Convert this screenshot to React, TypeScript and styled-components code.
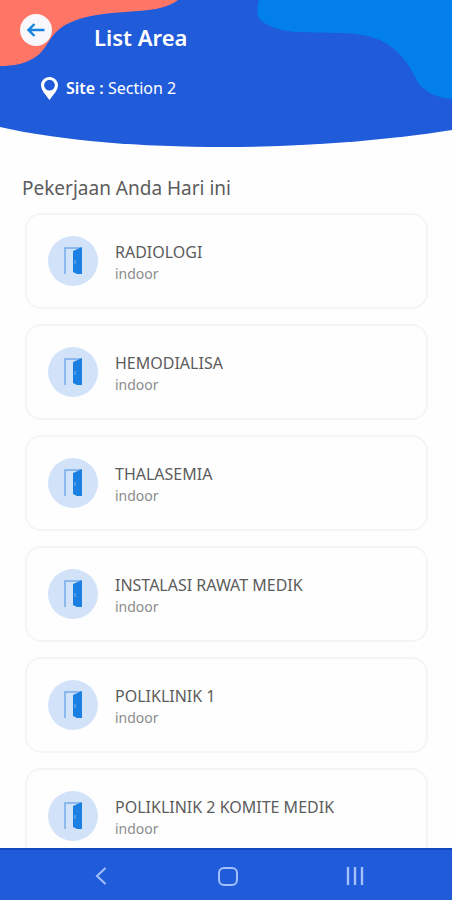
import React from "react";
import styled, { createGlobalStyle } from "styled-components";

const GlobalStyle = createGlobalStyle`
  *, *::before, *::after {
    box-sizing: border-box;
  }
  body {
    margin: 0;
    background: #fefefe;
    font-family: "Noto Sans", "Open Sans", sans-serif;
  }
  h1, h2, h3, p, ul {
    margin: 0;
    padding: 0;
    font-weight: 400;
  }
`;

const Screen = styled.div`
  display: flex;
  flex-direction: column;
  height: 100vh;
  overflow: hidden;
`;

const Header = styled.header`
  position: relative;
  flex: none;
  height: 148px;
  padding: 14px 20px 0;
  color: #fff;
`;

const HeaderArt = styled.svg`
  position: absolute;
  inset: 0;
  z-index: -1;
  width: 100%;
  height: 100%;
`;

const TitleRow = styled.div`
  display: flex;
  align-items: flex-start;
  gap: 42px;
`;

const BackButton = styled.button`
  display: grid;
  place-items: center;
  width: 32px;
  height: 32px;
  padding: 0;
  border: 0;
  border-radius: 50%;
  background: #f8f8fc;
  cursor: pointer;
`;

const Title = styled.h1`
  padding-top: 8px;
  font-size: 22px;
  font-weight: 600;
  line-height: 30px;
`;

const SiteRow = styled.div`
  display: flex;
  align-items: center;
  gap: 8px;
  margin-top: 24px;
  padding-left: 21px;
`;

const SiteText = styled.p`
  font-size: 16px;
  line-height: 24px;
`;

const SiteLabel = styled.span`
  font-weight: 600;
`;

const Content = styled.main`
  flex: 1;
  min-height: 0;
  overflow: hidden;
  padding: 26px 24px 0 25px;
`;

const Heading = styled.h2`
  margin-left: -3px;
  color: #5c5c5c;
  font-size: 19px;
  line-height: 28px;
`;

const AreaList = styled.ul`
  display: flex;
  flex-direction: column;
  gap: 15px;
  padding-top: 11px;
  list-style: none;
`;

const AreaCard = styled.li`
  display: flex;
  align-items: center;
  gap: 17px;
  flex: none;
  height: 96px;
  padding: 0 21px;
  border: 2px solid #f5f5f5;
  border-radius: 16px;
  background: #fefefe;
`;

const IconDisc = styled.span`
  display: grid;
  place-items: center;
  flex: none;
  width: 50px;
  height: 50px;
  border-radius: 50%;
  background: #d1e2f9;
`;

const AreaText = styled.div`
  padding-top: 3px;
`;

const AreaName = styled.h3`
  color: #5c5c5c;
  font-size: 16px;
  line-height: 22px;
`;

const AreaKind = styled.p`
  color: #8c8c8c;
  font-size: 14px;
  line-height: 22px;
`;

const NavBar = styled.nav`
  display: grid;
  grid-template-columns: repeat(3, 1fr);
  flex: none;
  height: 52px;
  padding: 0 36px;
  border-top: 2px solid #1449bd;
  background: #205bda;
`;

const NavButton = styled.button`
  display: grid;
  place-items: center;
  padding: 2px 0 0 4px;
  border: 0;
  background: none;
  color: #a3c0fa;
  cursor: pointer;
`;

const areas = [
  "RADIOLOGI",
  "HEMODIALISA",
  "THALASEMIA",
  "INSTALASI RAWAT MEDIK",
  "POLIKLINIK 1",
  "POLIKLINIK 2 KOMITE MEDIK",
];

function HeaderBackground() {
  return (
    <HeaderArt viewBox="0 0 452 148" preserveAspectRatio="none" aria-hidden="true">
      <path d="M0 0H452V130C382 141 302 147 222 147C142 147 62 141 0 127Z" fill="#205bda" />
      <path
        d="M0 0H178C169 7 155 10 138 11C112 13 86 14 67 24C47 35 49 49 34 58C24 64 14 66 0 66Z"
        fill="#ff7566"
      />
      <path
        d="M259 0H452V99C437 98 424 92 417 81C413 73 410 66 402 57C386 38 365 33 335 33C306 32 286 34 268 25C256 19 256 13 259 0Z"
        fill="#027fea"
      />
    </HeaderArt>
  );
}

function DoorIcon() {
  return (
    <svg width="18" height="28" viewBox="0 0 18 28" aria-hidden="true">
      <path d="M1 27V1H17" fill="none" stroke="#76acea" strokeWidth="1.5" />
      <path d="M9 4L18 0V27L13 27L9 25Z" fill="#1c7fe2" />
      <path d="M11 13V17" stroke="#7db5f0" strokeWidth="1" />
    </svg>
  );
}

export default function App() {
  return (
    <>
      <GlobalStyle />
      <Screen>
        <Header>
          <HeaderBackground />
          <TitleRow>
            <BackButton type="button" aria-label="Back">
              <svg width="18" height="14" viewBox="0 0 18 14" fill="none" stroke="#1882e0" strokeWidth="2.4" aria-hidden="true">
                <path d="M17.5 7H1.5M7.5 1L1.5 7L7.5 13" />
              </svg>
            </BackButton>
            <Title>List Area</Title>
          </TitleRow>
          <SiteRow>
            <svg width="17" height="23" viewBox="0 0 17 23" aria-hidden="true">
              <path
                fill="#fff"
                fillRule="evenodd"
                d="M8.5 0C3.7 0 0 3.7 0 8.2C0 13.2 5 18 8.5 23C12 18 17 13.2 17 8.2C17 3.7 13.3 0 8.5 0ZM8.5 2.8A5.4 5.4 0 1 1 8.5 13.6A5.4 5.4 0 1 1 8.5 2.8Z"
              />
            </svg>
            <SiteText>
              <SiteLabel>Site :</SiteLabel> Section 2
            </SiteText>
          </SiteRow>
        </Header>
        <Content>
          <Heading>Pekerjaan Anda Hari ini</Heading>
          <AreaList>
            {areas.map((name) => (
              <AreaCard key={name}>
                <IconDisc>
                  <DoorIcon />
                </IconDisc>
                <AreaText>
                  <AreaName>{name}</AreaName>
                  <AreaKind>indoor</AreaKind>
                </AreaText>
              </AreaCard>
            ))}
          </AreaList>
        </Content>
        <NavBar aria-label="System">
          <NavButton type="button" aria-label="Back">
            <svg width="12" height="18" viewBox="0 0 12 18" fill="none" stroke="currentColor" strokeWidth="2" aria-hidden="true">
              <path d="M10.5 1L2 9L10.5 17" />
            </svg>
          </NavButton>
          <NavButton type="button" aria-label="Home">
            <svg width="20" height="19" viewBox="0 0 20 19" fill="none" stroke="currentColor" strokeWidth="2" aria-hidden="true">
              <rect x="1" y="1" width="18" height="17" rx="5" />
            </svg>
          </NavButton>
          <NavButton type="button" aria-label="Recent apps">
            <svg width="18" height="18" viewBox="0 0 18 18" stroke="currentColor" strokeWidth="2.4" aria-hidden="true">
              <path d="M2 0V18M9 0V18M16 0V18" />
            </svg>
          </NavButton>
        </NavBar>
      </Screen>
    </>
  );
}
